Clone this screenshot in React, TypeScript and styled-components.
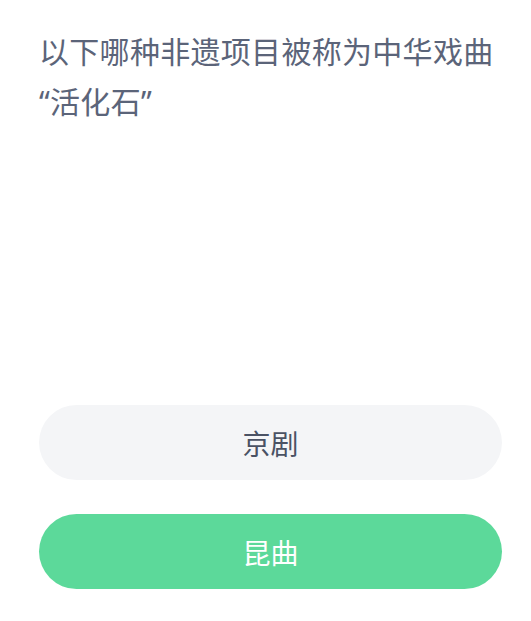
import styled, { createGlobalStyle } from "styled-components";

const GlobalStyle = createGlobalStyle`
  html, body {
    margin: 0;
    padding: 0;
    background: #ffffff;
  }
  body {
    font-family: "Noto Sans", "Noto Sans CJK SC", sans-serif;
  }
`;

const Page = styled.main`
  width: 531px;
  height: 621px;
  box-sizing: border-box;
  padding: 27px 29px 0 39px;
  display: flex;
  flex-direction: column;
`;

const Question = styled.h1`
  margin: 0;
  font-size: 30px;
  font-weight: 400;
  line-height: 50px;
  letter-spacing: 0.3px;
  color: #5b6479;
  white-space: nowrap;
`;

const Options = styled.ul`
  list-style: none;
  margin: 0;
  padding: 0;
  margin-top: 278px;
  display: flex;
  flex-direction: column;
  gap: 34px;
`;

const Option = styled.li<{ $selected?: boolean }>`
  height: 75px;
  border-radius: 38px;
  display: flex;
  align-items: center;
  justify-content: center;
  font-size: 28px;
  color: ${(p) => (p.$selected ? "#ffffff" : "#4a5264")};
  background: ${(p) => (p.$selected ? "#5cd99a" : "#f4f5f7")};
`;

const options = [
  { label: "京剧", selected: false },
  { label: "昆曲", selected: true },
];

function App() {
  return (
    <>
      <GlobalStyle />
      <Page>
        <Question>
          以下哪种非遗项目被称为中华戏曲
          <br />
          “活化石”
        </Question>
        <Options>
          {options.map((o) => (
            <Option key={o.label} $selected={o.selected}>
              {o.label}
            </Option>
          ))}
        </Options>
      </Page>
    </>
  );
}

export default App;
